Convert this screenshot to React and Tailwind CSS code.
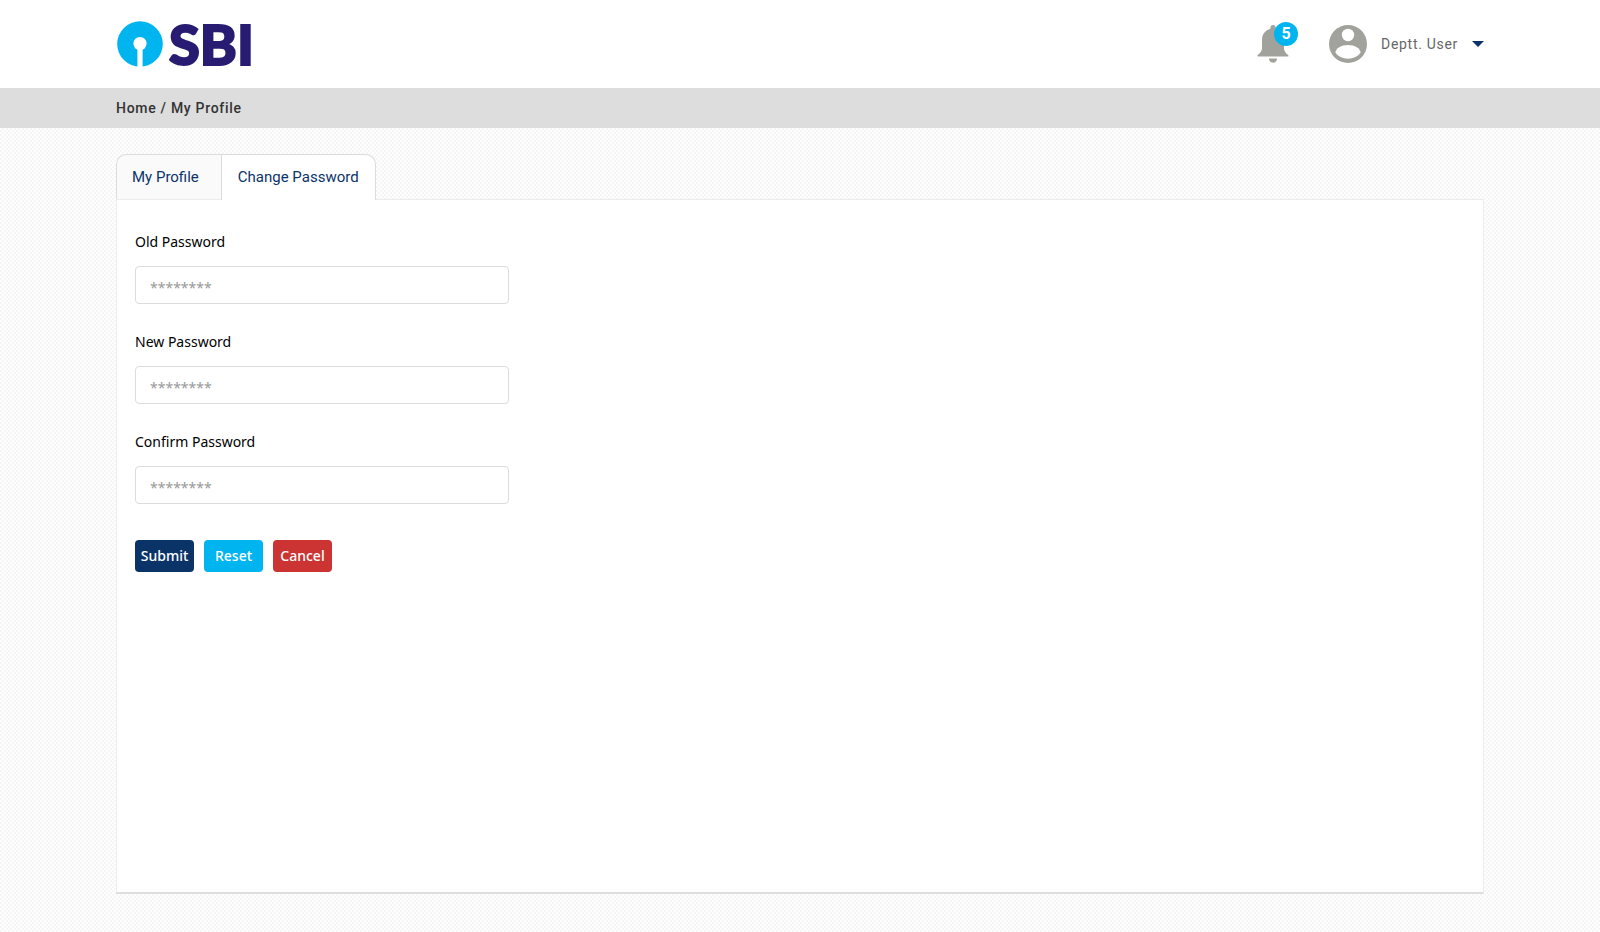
import { useState } from "react";

const fields = [
  { id: "oldPassword", label: "Old Password" },
  { id: "newPassword", label: "New Password" },
  { id: "confirmPassword", label: "Confirm Password" },
];

const emptyForm = { oldPassword: "", newPassword: "", confirmPassword: "" };

const Logo = () => (
  <a href="#home" className="flex items-center gap-[6px] pl-px">
    <svg viewBox="0 0 46 46" className="h-[46px] w-[46px]" aria-hidden="true">
      <circle cx="23" cy="23" r="22.8" fill="#00b5ef" />
      <circle cx="23" cy="22.5" r="6.6" fill="#fff" />
      <rect x="20.4" y="26" width="5.2" height="20" fill="#fff" />
    </svg>
    <span className="font-['Lato',sans-serif] text-[56px] leading-[60px] font-black text-[#281b72] [-webkit-text-stroke:2px_#281b72]">
      SBI
    </span>
  </a>
);

const Notifications = () => (
  <button type="button" aria-label="Notifications" className="relative">
    <svg viewBox="0 0 32 38" className="h-[38px] w-8" fill="#a2a29c" aria-hidden="true">
      <path d="M16 0c1.500 0 2.600 1.100 2.600 2.600v1.200C23.800 5.200 27 9.500 27 15v8.500c0 2.600 1.800 4.700 4.300 6.600v1.400H.5v-1.400C3 28.200 5 26.100 5 23.500V15C5 9.500 8.200 5.200 13.400 3.800V2.600C13.400 1.100 14.500 0 16 0z" />
      <path d="M12 33.500h8c0 2.400-1.800 4.300-4 4.300s-4-1.900-4-4.300z" />
    </svg>
    {/* unread count */}
    <span className="absolute -top-[3px] -right-[9px] flex h-6 w-6 items-center justify-center rounded-full bg-[#00b5ef] font-['Roboto',sans-serif] text-base font-bold text-white">
      5
    </span>
  </button>
);

const UserMenu = () => (
  <button type="button" className="flex items-center gap-[14px]">
    <svg viewBox="0 0 38 38" className="h-[38px] w-[38px]" aria-hidden="true">
      <circle cx="19" cy="19" r="19" fill="#a2a29c" />
      <circle cx="19" cy="10" r="6.200" fill="#fff" />
      <path d="M6.500 27.500c0-4 6-7.500 12.500-7.500s12.500 3.500 12.500 7.500c-2.600 4-7.200 6.200-12.500 6.200S9.100 31.500 6.500 27.500z" fill="#fff" />
    </svg>
    <span className="text-sm tracking-wider text-[#666]">Deptt. User</span>
    <svg viewBox="0 0 12 6" className="h-[6px] w-3" aria-hidden="true">
      <path d="M0 0h12L6 6z" fill="#0a3468" />
    </svg>
  </button>
);

export default function App() {
  const [tab, setTab] = useState("password");
  const [form, setForm] = useState(emptyForm);

  return (
    <div className="flex min-h-screen flex-col bg-[conic-gradient(#f6f6f6_25%,#fefefe_0_50%,#f6f6f6_0_75%,#fefefe_0)] bg-size-[4px_4px] font-['Roboto',sans-serif]">
      <header className="bg-white">
        <div className="mx-auto flex h-[88px] w-[85.5%] items-center justify-between">
          <Logo />
          <div className="flex items-center gap-10">
            <Notifications />
            <UserMenu />
          </div>
        </div>
      </header>

      <nav aria-label="Breadcrumb" className="bg-[#dddddd]">
        <div className="mx-auto flex h-10 w-[85.5%] items-center text-sm font-medium tracking-wider text-[#333]">
          <a href="#home" className="whitespace-pre">Home </a>
          <span className="whitespace-pre">/ My Profile</span>
        </div>
      </nav>

      <main className="mx-auto flex w-[85.5%] flex-1 flex-col pt-[26px] pb-[38px]">
        <div role="tablist" className="flex text-[15px] text-[#0a3468]">
          <button
            type="button"
            role="tab"
            aria-selected={tab === "profile"}
            onClick={() => setTab("profile")}
            className="h-[45px] rounded-tl-[10px] border-t border-l border-[#dcdcdc] bg-[#fafafa] pr-[22px] pl-[15px]"
          >
            My Profile
          </button>
          {/* active tab sits over the top border of the panel */}
          <button
            type="button"
            role="tab"
            aria-selected={tab === "password"}
            onClick={() => setTab("password")}
            className="relative -mb-px h-[46px] rounded-tr-[10px] border border-b-0 border-[#dcdcdc] bg-white px-4"
          >
            Change Password
          </button>
        </div>

        <section className="flex-1 border border-b-2 border-[#ececec] border-b-[#dedede] bg-white px-[18px] pt-8 font-['Noto_Sans',sans-serif]">
          <form
            onSubmit={(e) => e.preventDefault()}
            onReset={() => setForm(emptyForm)}
            className="text-sm"
          >
            <div className="flex max-w-[374px] flex-col gap-7">
              {fields.map((field) => (
                <div key={field.id} className="flex flex-col gap-[14px]">
                  <label htmlFor={field.id} className="leading-5 text-black">{field.label}</label>
                  <input
                    id={field.id}
                    type="password"
                    placeholder="********"
                    value={form[field.id]}
                    onChange={(e) => setForm({ ...form, [field.id]: e.target.value })}
                    className="h-[38px] w-full rounded border border-[#dcdcdc] bg-white px-[14px] pt-1 placeholder:text-[#999]"
                  />
                </div>
              ))}
            </div>

            <div className="mt-9 flex gap-[10px] font-medium text-white">
              <button type="submit" className="h-8 w-[59px] rounded bg-[#0a3468]">Submit</button>
              <button type="reset" className="h-8 w-[59px] rounded bg-[#00b5ef]">Reset</button>
              <button type="button" className="h-8 w-[59px] rounded bg-[#cc3333]">Cancel</button>
            </div>
          </form>
        </section>
      </main>
    </div>
  );
}
